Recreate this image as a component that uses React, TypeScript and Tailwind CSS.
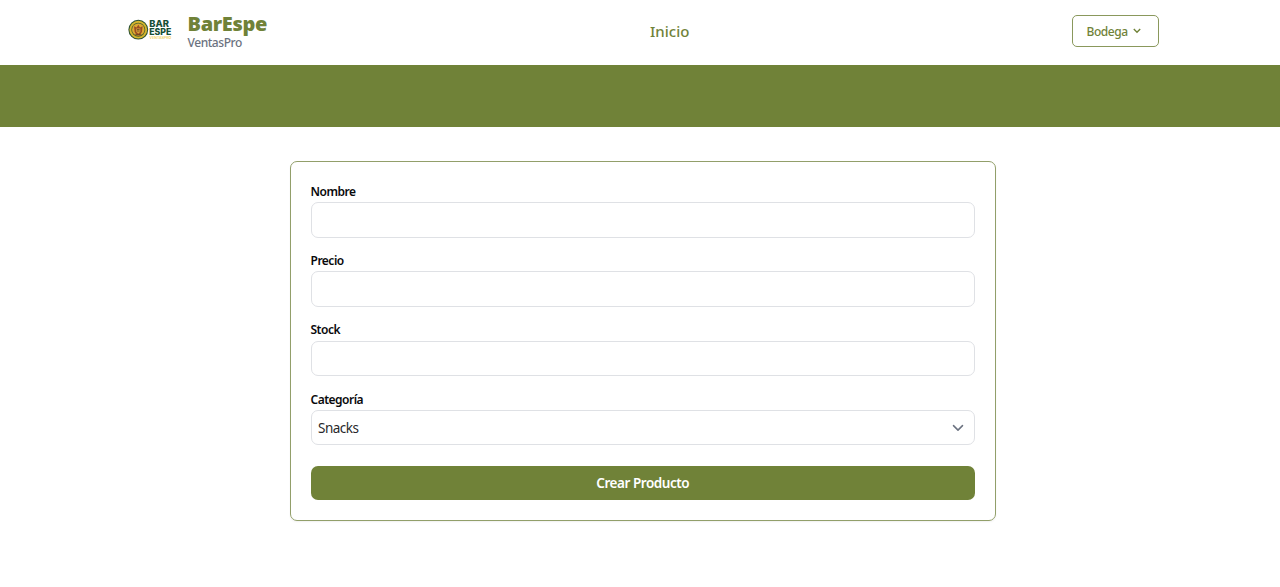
import React from "react";

const fieldBox =
  "block h-[35.5px] w-full rounded-[7px] border border-[#dfe1e5] bg-white px-[6.5px] text-[13.5px] tracking-[-0.5px] text-[#27272a] outline-none";

function Logo() {
  return (
    <svg width="46" height="24" viewBox="0 0 46 24" className="block" aria-label="Bar Espe">
      <circle cx="10.3" cy="11.7" r="9.9" fill="#2c5234" />
      <circle cx="10.3" cy="11.7" r="8.9" fill="#d6b62c" />
      <circle cx="10.3" cy="11.7" r="7" fill="#4b6230" />
      <circle cx="10.3" cy="11.7" r="6.2" fill="#dda832" />
      <path d="M6 8.2 8.6 9.4 10.3 6.7 12 9.4 14.6 8.2 14 13.8 12 17.2H8.6L6.6 13.8Z" fill="#9a4e24" />
      <path d="M8.3 10.5h4v3.2l-2 2-2-2Z" fill="#e0a53a" />
      <path d="M9 11.5h2.6M9 13h2.6M7.2 16.8h6.2" stroke="#61441f" strokeWidth=".8" />
      <g fontFamily="Inter, 'Liberation Sans', sans-serif" fontWeight="800">
        <text x="21.2" y="9.2" fontSize="9.6" textLength="19.8" lengthAdjust="spacingAndGlyphs" fill="#174f35">BAR</text>
        <text x="21.2" y="17.4" fontSize="9.6" textLength="22.2" lengthAdjust="spacingAndGlyphs" fill="#174f35">ESPE</text>
        <text x="21.6" y="21.4" fontSize="3.6" fontWeight="500" textLength="21.6" lengthAdjust="spacingAndGlyphs" fill="#f0c93c">VENTASPRO</text>
      </g>
    </svg>
  );
}

function Field({ label, children }: { label: string; children: React.ReactNode }) {
  return (
    <label className="mb-[13.8px] block">
      <span className="block h-[20px] pt-[0.8px] text-[12px] font-semibold leading-[18px] tracking-[-0.5px] text-[#09090b]">
        {label}
      </span>
      {children}
    </label>
  );
}

export default function App() {
  return (
    <div className="min-h-[587px] bg-white font-['Noto_Sans','Open_Sans',sans-serif]">
      <header className="grid h-[65px] grid-cols-[522.5px_auto_1fr] items-center pl-[127.5px] pr-[121px]">
        <div className="flex items-center">
          <div className="-mt-[5px] w-[60px]">
            <Logo />
          </div>
          <div>
            <h1 className="text-[20px] font-black leading-[20px] tracking-[-0.35px] text-[#708238]">BarEspe</h1>
            <p className="text-[12px] font-medium leading-[17px] tracking-[-0.45px] text-[#6b7280]">VentasPro</p>
          </div>
        </div>
        <nav className="-mt-[3.5px]">
          <a href="#" className="text-[15px] font-medium text-[#708238]">Inicio</a>
        </nav>
        <button className="-mt-[3px] flex h-[32px] w-[87px] items-center justify-self-end rounded-[5px] border border-[#8a985c] pl-[13.5px] text-[12px] font-medium tracking-[-0.45px] text-[#708238]">
          <span className="pt-px">Bodega</span>
          <svg width="8" height="6" viewBox="0 0 8 6" fill="none" className="ml-[5.5px] -mt-px">
            <path d="m.8 1.1 3.2 3.1 3.2-3.1" stroke="currentColor" strokeWidth="1.4" />
          </svg>
        </button>
      </header>
      <div className="h-[62px] bg-[#708238]" />
      <main className="pl-[289.5px] pt-[34px]">
        <form className="h-[360px] w-[706.5px] rounded-[7px] border border-[#929f6a] px-[20px] pt-[20px] shadow-[0_1px_2px_rgba(0,0,0,0.06)]">
          <Field label="Nombre">
            <input className={fieldBox} />
          </Field>
          <Field label="Precio">
            <input className={fieldBox} />
          </Field>
          <Field label="Stock">
            <input className={fieldBox} />
          </Field>
          <Field label="Categoría">
            <span className="grid">
              <select className={`${fieldBox} col-start-1 row-start-1 appearance-none pt-px`}>
                <option>Snacks</option>
              </select>
              <svg
                width="12"
                height="8"
                viewBox="0 0 12 8"
                fill="none"
                className="pointer-events-none col-start-1 row-start-1 mr-[11.5px] self-center justify-self-end"
              >
                <path d="m1.5 1.6 4.5 4.5 4.5-4.5" stroke="#6b7280" strokeWidth="1.5" strokeLinecap="round" strokeLinejoin="round" />
              </svg>
            </span>
          </Field>
          <button
            type="button"
            className="mt-[20.6px] block h-[34px] w-full rounded-[7px] bg-[#708238] text-[13.5px] font-semibold tracking-[-0.45px] text-white"
          >
            Crear Producto
          </button>
        </form>
      </main>
    </div>
  );
}
